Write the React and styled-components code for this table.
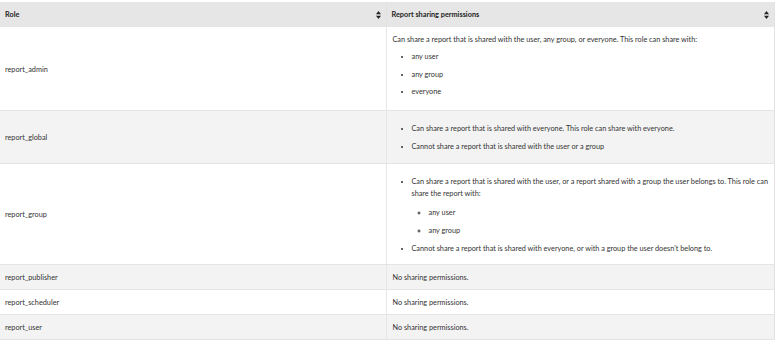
import React from 'react'
import styled, { createGlobalStyle } from 'styled-components'

const Global = createGlobalStyle`
  body {
    margin: 0;
    background: #fff;
    font-family: Lato, "Open Sans", sans-serif;
    -webkit-font-smoothing: antialiased;
  }
`

const Page = styled.div`
  padding-top: 2px;
  width: 775px;
`

const Table = styled.table`
  width: 775px;
  border-collapse: collapse;
  table-layout: fixed;
  font-size: 7.3px;
  line-height: 12px;
  color: #333;
  border-right: 1px solid #e2e2e2;
`

const Head = styled.th`
  background: #e6e6e6;
  text-align: left;
  font-weight: 700;
  height: 25px;
  padding: 0 5px;
  color: #222;
  border-left: ${props => (props.first ? '0' : '1px solid #e2e2e2')};
`

const HeadInner = styled.div`
  display: flex;
  align-items: center;
  justify-content: space-between;
`

const Row = styled.tr`
  background: ${props => (props.shaded ? '#f3f3f3' : '#fff')};
  border-bottom: 1px solid #e4e4e4;
`

const Cell = styled.td`
  padding: 7px 5px 5px 6px;
  vertical-align: middle;
  border-left: ${props => (props.first ? '0' : '1px solid #e6e6e6')};
  padding-left: ${props => (props.first ? '5px' : '6px')};
  padding-bottom: ${props => props.bottom || '5px'};
`

const Para = styled.p`
  margin: 0 0 5px;
`

const List = styled.ul`
  margin: ${props => (props.nested ? '7px 0 0' : '5px 0 0')};
  padding-left: ${props => (props.nested ? '17px' : '19px')};
  list-style: ${props => (props.nested ? 'circle' : 'disc')};
`

const Item = styled.li`
  margin-bottom: ${props => (props.tight ? '6px' : '5.5px')};
  &:last-child {
    margin-bottom: 0;
  }
`

const SortIcon = () => (
  <svg width="5" height="8" viewBox="0 0 5 8">
    <path d="M2.5 0 L5 3.3 L0 3.3 Z" fill="#222" />
    <path d="M2.5 8 L5 4.7 L0 4.7 Z" fill="#222" />
  </svg>
)

const simple = ['report_publisher', 'report_scheduler', 'report_user']

export default function App() {
  return (
    <Page>
      <Global />
      <Table>
        <colgroup>
          <col style={{ width: '386px' }} />
          <col />
        </colgroup>
        <thead>
          <tr>
            <Head first>
              <HeadInner>
                Role
                <SortIcon />
              </HeadInner>
            </Head>
            <Head>
              <HeadInner>
                Report sharing permissions
                <SortIcon />
              </HeadInner>
            </Head>
          </tr>
        </thead>
        <tbody>
          <Row>
            <Cell first>report_admin</Cell>
            <Cell bottom="12px">
              <Para>
                Can share a report that is shared with the user, any group, or everyone. This role
                can share with:
              </Para>
              <List>
                <Item>any user</Item>
                <Item>any group</Item>
                <Item>everyone</Item>
              </List>
            </Cell>
          </Row>
          <Row shaded>
            <Cell first>report_global</Cell>
            <Cell bottom="10px">
              <List>
                <Item>Can share a report that is shared with everyone. This role can share with everyone.</Item>
                <Item>Cannot share a report that is shared with the user or a group</Item>
              </List>
            </Cell>
          </Row>
          <Row>
            <Cell first>report_group</Cell>
            <Cell bottom="9px">
              <List>
                <Item tight>
                  Can share a report that is shared with the user, or a report shared with a group the
                  user belongs to. This role can share the report with:
                  <List nested>
                    <Item tight>any user</Item>
                    <Item tight>any group</Item>
                  </List>
                </Item>
                <Item>Cannot share a report that is shared with everyone, or with a group the user doesn't belong to.</Item>
              </List>
            </Cell>
          </Row>
          {simple.map((role, i) => (
            <Row key={role} shaded={i % 2 === 0}>
              <Cell first>{role}</Cell>
              <Cell>No sharing permissions.</Cell>
            </Row>
          ))}
        </tbody>
      </Table>
    </Page>
  )
}
